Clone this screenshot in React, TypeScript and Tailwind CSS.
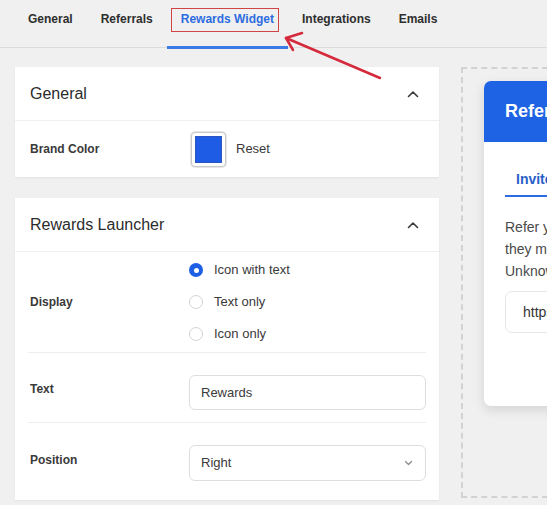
import React from "react";

const font = { fontFamily: '"Liberation Sans", Arial, sans-serif' };

function ChevronUp() {
  return (
    <svg width="12" height="8" viewBox="0 0 12 8" fill="none" className="text-[#3a3a3a]">
      <path d="M1.5 6.5 L6 2 L10.5 6.5" stroke="currentColor" strokeWidth="1.6" strokeLinecap="round" strokeLinejoin="round" />
    </svg>
  );
}

function Radio({ checked, label }: { checked?: boolean; label: string }) {
  return (
    <div className="flex items-center gap-[11px] h-[32px]">
      {checked ? (
        <span className="w-[14px] h-[14px] rounded-full bg-[#1f5fe6] flex items-center justify-center">
          <span className="w-[5px] h-[5px] rounded-full bg-white" />
        </span>
      ) : (
        <span className="w-[14px] h-[14px] rounded-full border border-[#d4d4d4] bg-white" />
      )}
      <span className="text-[13px] text-[#3a3a3a]">{label}</span>
    </div>
  );
}

export default function App() {
  const tabs = ["General", "Referrals", "Rewards Widget", "Integrations", "Emails"];
  return (
    <div className="relative w-[547px] h-[505px] overflow-hidden bg-[#f0f0f0]" style={font}>
      {/* Tabs */}
      <div className="flex h-[48px] border-b border-[#dcdcdc] pl-[14px]">
        {tabs.map((t) => {
          const active = t === "Rewards Widget";
          return (
            <div
              key={t}
              className={
                "relative px-[14px] pt-[11px] text-[12px] font-bold leading-[16px] " +
                (active ? "text-[#2d6ce0] border-b-[3px] border-[#3a7be6] h-[49px]" : "text-[#2e2e2e]")
              }
            >
              {t}
              {active && (
                <span className="absolute left-[4px] right-[9px] top-[8px] h-[24px] border-[1.5px] border-[#cf4545]" />
              )}
            </div>
          );
        })}
      </div>

      {/* Content */}
      <div className="flex gap-[22px] pl-[15px] pt-[19px]">
        {/* Left column */}
        <div className="w-[424px] shrink-0 flex flex-col gap-[21px]">
          {/* General panel */}
          <div className="bg-white shadow-[0_1px_2px_rgba(0,0,0,0.06)]">
            <div className="flex items-center justify-between h-[54px] pl-[15px] pr-[20px] border-b border-[#efefef]">
              <span className="text-[16px] text-[#2c2c2c] font-medium">General</span>
              <ChevronUp />
            </div>
            <div className="flex items-center h-[56px] pl-[15px]">
              <span className="w-[161px] text-[12px] font-bold text-[#3a3a3a]">Brand Color</span>
              <span className="w-[35px] h-[35px] rounded-[4px] border border-[#c8c8c8] bg-white flex items-center justify-center shadow-[0_0_0_1px_#e6e6e6]">
                <span className="w-[27px] h-[27px] bg-[#1f5ce6] border border-[#4a4a6a]/30" />
              </span>
              <span className="ml-[10px] text-[13px] text-[#3a3a3a]">Reset</span>
            </div>
          </div>

          {/* Rewards Launcher panel */}
          <div className="bg-white shadow-[0_1px_2px_rgba(0,0,0,0.06)] pb-[19px]">
            <div className="flex items-center justify-between h-[54px] pl-[15px] pr-[20px] border-b border-[#efefef]">
              <span className="text-[16px] text-[#2c2c2c] font-medium">Rewards Launcher</span>
              <ChevronUp />
            </div>
            <div className="mx-[13px] border-b border-[#eeeeee] flex items-center h-[101px] pl-[2px]">
              <span className="w-[159px] text-[12px] font-bold text-[#3a3a3a]">Display</span>
              <div className="flex flex-col">
                <Radio checked label="Icon with text" />
                <Radio label="Text only" />
                <Radio label="Icon only" />
              </div>
            </div>
            <div className="mx-[13px] border-b border-[#eeeeee] flex items-start h-[70px] pl-[2px] pt-[22px]">
              <span className="w-[159px] text-[12px] font-bold text-[#3a3a3a] mt-[6px] leading-[16px]">Text</span>
              <div className="flex-1 h-[35px] rounded-[6px] border border-[#dedede] flex items-center pl-[11px] text-[13px] text-[#3a3a3a]">
                Rewards
              </div>
            </div>
            <div className="mx-[13px] flex items-start pl-[2px] pt-[22px]">
              <span className="w-[159px] text-[12px] font-bold text-[#3a3a3a] mt-[7px] leading-[16px]">Position</span>
              <div className="flex-1 h-[36px] rounded-[6px] border border-[#dedede] flex items-center justify-between pl-[11px] pr-[12px] text-[13px] text-[#3a3a3a]">
                <span>Right</span>
                <svg width="9" height="6" viewBox="0 0 9 6" fill="none">
                  <path d="M1.5 1.5 L4.5 4.5 L7.5 1.5" stroke="#8a8a8a" strokeWidth="1.2" strokeLinecap="round" strokeLinejoin="round" />
                </svg>
              </div>
            </div>
          </div>
        </div>

        {/* Right preview */}
        <div className="w-[320px] shrink-0 h-[431px] border-2 border-dashed border-[#d2d2d2] pl-[21px] pt-[12px]">
          <div className="w-[290px] h-[325px] bg-white rounded-[7px] shadow-[0_4px_12px_rgba(0,0,0,0.12)] overflow-hidden">
            <div className="h-[61px] bg-[#1d63e4] flex items-center pl-[21px] text-[18px] font-bold text-white">
              Refer a Friend
            </div>
            <div className="pl-[21px] pt-[25px]">
              <div className="inline-block px-[11px] pb-[5px] border-b-2 border-[#2d6ce0] text-[14px] font-bold text-[#2860c8]">
                Invite Friends
              </div>
              <div className="mt-[19px] text-[14px] leading-[22px] text-[#4a4a4a] whitespace-nowrap">
                <div>Refer your friends to get rewards. When</div>
                <div>they make a purchase, you'll receive</div>
                <div>Unknown reward.</div>
              </div>
              <div className="mt-[9px] h-[42px] w-[260px] rounded-[7px] border border-[#e6e6e6] flex items-center pl-[17px] text-[14px] text-[#333]">
                https://example.com/ref
              </div>
            </div>
          </div>
        </div>
      </div>

      {/* Red arrow annotation */}
      <svg className="absolute left-0 top-0 pointer-events-none" width="547" height="505" viewBox="0 0 547 505">
        <g stroke="#d52a3c" strokeWidth="2.5" strokeLinecap="round" fill="none">
          <path d="M380 78 L286 38" />
          <path d="M286 38 L302 33" />
          <path d="M286 38 L293 50" />
        </g>
      </svg>
    </div>
  );
}
